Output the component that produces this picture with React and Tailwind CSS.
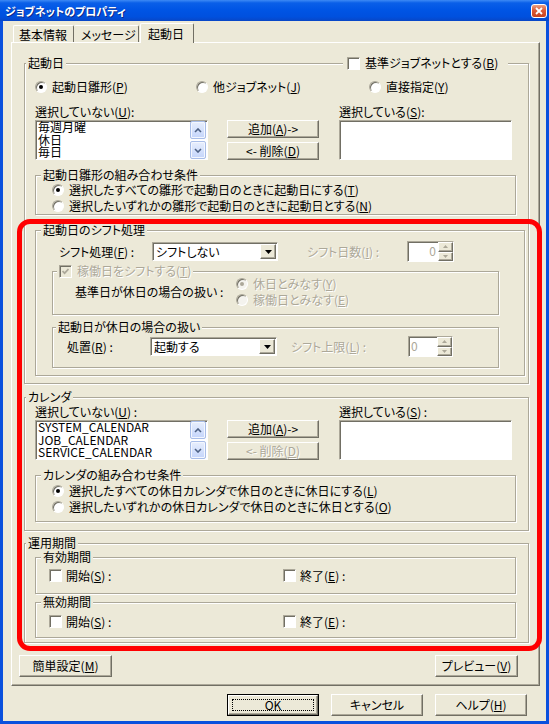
import React from 'react';

const sunken = "border border-t-[#aca899] border-l-[#aca899] border-r-white border-b-white shadow-[inset_1px_1px_0_#716f64]";
const raised = "border border-t-white border-l-white border-r-[#716f64] border-b-[#716f64] shadow-[inset_-1px_-1px_0_#aca899]";
const etched = "border border-[#aca899] shadow-[inset_1px_1px_0_#fff,1px_1px_0_#fff]";
const dim = "text-[#aca899] [text-shadow:1px_1px_0_#fff]";

function K({ children }) {
  return <span className="underline underline-offset-[1px]">{children}</span>;
}

function Radio({ checked, disabled }) {
  return (
    <span className={`${sunken} rounded-full w-[12px] h-[12px] shrink-0 flex items-center justify-center ${disabled ? 'bg-[#f4f3ee]' : 'bg-white'}`}>
      {checked && <span className={`w-[4px] h-[4px] rounded-full ${disabled ? 'bg-[#aca899]' : 'bg-black'}`} />}
    </span>
  );
}

function CheckBox({ checked, disabled }) {
  return (
    <span className={`${sunken} w-[13px] h-[13px] shrink-0 flex items-center justify-center ${disabled ? 'bg-[#ece9d8]' : 'bg-white'}`}>
      {checked && (
        <svg width="7" height="7" viewBox="0 0 7 7">
          <path d="M0.5 3L2.6 5.2L6.5 1" fill="none" stroke={disabled ? '#aca899' : '#000'} strokeWidth="1.7" />
        </svg>
      )}
    </span>
  );
}

function RadioOpt({ checked, disabled, className = '', children }) {
  return (
    <div className={`flex items-center h-[12px] ${className}`}>
      <Radio checked={checked} disabled={disabled} />
      <span className={`ml-[5px] whitespace-nowrap ${disabled ? dim : ''}`}>{children}</span>
    </div>
  );
}

function CheckOpt({ className = '', children }) {
  return (
    <div className={`flex items-center h-[13px] ${className}`}>
      <CheckBox />
      <span className="ml-[4px] whitespace-nowrap">{children}</span>
    </div>
  );
}

function Btn({ className = '', disabled, children }) {
  return (
    <div className={`${raised} bg-[#ece9d8] flex items-center justify-center whitespace-nowrap ${disabled ? dim : ''} ${className}`}>
      {children}
    </div>
  );
}

function ScrollBtn({ down }) {
  return (
    <div className="w-[16px] h-[18px] rounded-[2px] border border-[#a8bde8] bg-[linear-gradient(180deg,#e8effd,#c4d5fb)] shadow-[inset_0_0_0_1px_#f4f7fe] flex items-center justify-center">
      <svg width="8" height="5" viewBox="0 0 8 5">
        <path d={down ? 'M1 1L4 4L7 1' : 'M1 4L4 1L7 4'} fill="none" stroke="#4d6185" strokeWidth="1.6" />
      </svg>
    </div>
  );
}

function ListBox({ items = [] }) {
  return (
    <div className={`${sunken} w-[173px] h-[40px] bg-white flex shrink-0`}>
      <div className="flex-1 pl-[2px] flex flex-col">
        {items.map((t) => (
          <span key={t} className="h-[12.5px] leading-[12.5px] whitespace-nowrap">{t}</span>
        ))}
      </div>
      {items.length > 0 && (
        <div className="w-[16px] mr-[1px] flex flex-col justify-between">
          <ScrollBtn />
          <ScrollBtn down />
        </div>
      )}
    </div>
  );
}

function Combo({ className = '', text }) {
  return (
    <div className={`${sunken} h-[19px] bg-white flex items-center shrink-0 ${className}`}>
      <span className="flex-1 pl-[3px] whitespace-nowrap">{text}</span>
      <div className={`${raised} bg-[#ece9d8] w-[16px] h-[15px] mr-[1px] flex items-center justify-center`}>
        <svg width="7" height="4" viewBox="0 0 7 4">
          <path d="M0 0H7L3.5 4Z" fill="#000" />
        </svg>
      </div>
    </div>
  );
}

function Spin({ className = '', textClass = '' }) {
  return (
    <div className={`${sunken} bg-white flex shrink-0 ${className}`}>
      <span className={`flex-1 px-[2px] pt-[3px] text-[#aca899] ${textClass}`}>0</span>
      <div className="w-[15px] flex flex-col">
        <div className={`${raised} flex-1 bg-[#ece9d8] flex items-center justify-center`}>
          <svg width="5" height="3" viewBox="0 0 5 3"><path d="M2.5 0L5 3H0Z" fill="#aca899" /></svg>
        </div>
        <div className={`${raised} flex-1 bg-[#ece9d8] flex items-center justify-center`}>
          <svg width="5" height="3" viewBox="0 0 5 3"><path d="M0 0H5L2.5 3Z" fill="#aca899" /></svg>
        </div>
      </div>
    </div>
  );
}

function Group({ className = '', label, labelClass = 'ml-[1px]', right, children }) {
  return (
    <div className={`${etched} flex flex-col shrink-0 ${className}`}>
      <div className="-mt-[7px] h-[12px] flex items-center justify-between">
        <span className={`px-[2px] h-[13px] bg-[#ece9d8] flex items-center gap-[5px] whitespace-nowrap ${labelClass}`}>{label}</span>
        {right}
      </div>
      {children}
    </div>
  );
}

function TitleBar() {
  return (
    <div className="h-[21px] shrink-0 flex items-center pl-[5px] bg-[linear-gradient(180deg,#3d8af5_0%,#0a5fe8_14%,#0055e5_45%,#0050de_80%,#0846c6_100%)]">
      <span className="text-white text-[11px] font-bold [text-shadow:1px_1px_0_#0a2a8a]">ジョブネットのプロパティ</span>
      <div className="ml-auto mr-[2px] w-[16px] h-[14px] rounded-[3px] border border-white bg-[linear-gradient(180deg,#eaa083,#dc5a36_45%,#c7421f)] flex items-center justify-center">
        <svg width="8" height="8" viewBox="0 0 8 8">
          <path d="M1 1L7 7M7 1L1 7" stroke="#fff" strokeWidth="1.8" />
        </svg>
      </div>
    </div>
  );
}

function Tabs() {
  return (
    <div className="h-[21px] shrink-0 flex items-end pl-[10px]">
      <div className="w-[61px] h-[17px] border-l border-t border-r border-l-white border-t-white border-r-[#716f64] rounded-t-[2px] flex items-center pl-[5px] pt-[2px]">
        基本情報
      </div>
      <div className="w-[65px] h-[17px] border-t border-r border-t-white border-r-[#716f64] rounded-t-[2px] flex items-center pl-[7px] pt-[2px]">
        メッセージ
      </div>
      <div className="ml-[1px] w-[54px] h-[20px] -mb-[1px] relative z-10 bg-[#ece9d8] border-l border-t border-r border-l-white border-t-white border-r-[#716f64] rounded-t-[2px] flex items-center pl-[7px] pt-[1px]">
        起動日
      </div>
    </div>
  );
}

export default function App() {
  return (
    <div className="relative w-[549px] h-[724px] bg-[#0a50dd] flex flex-col overflow-hidden text-[12px] leading-[12px] text-black [font-family:'Noto_Sans_CJK_JP','Noto_Sans',sans-serif] [font-feature-settings:'palt']">
      <TitleBar />
      <div className="mx-[3px] h-[700px] bg-[#ece9d8] flex flex-col">
        <Tabs />
        <div className="ml-[8px] w-[529px] h-[644px] shrink-0 border border-t-white border-l-white border-r-[#716f64] border-b-[#716f64] shadow-[inset_-1px_-1px_0_#aca899] flex flex-col">
          {/* 起動日 */}
          <Group
            className="ml-[12px] mt-[20px] w-[505px] h-[321px]"
            label="起動日"
            right={
              <div className="mr-[20px] w-[165px] h-[13px] pl-[4px] bg-[#ece9d8] flex items-center gap-[5px]">
                <CheckBox />
                <span className="whitespace-nowrap">基準ジョブネットとする(<K>B</K>)</span>
              </div>
            }
          >
            <div className="mt-[12px] ml-[10px] h-[12px] flex">
              <RadioOpt checked className="w-[161px]">起動日雛形(<K>P</K>)</RadioOpt>
              <RadioOpt className="w-[173px]">他ジョブネット(<K>J</K>)</RadioOpt>
              <RadioOpt>直接指定(<K>Y</K>)</RadioOpt>
            </div>
            <div className="mt-[13px] ml-[10px] h-[12px] flex">
              <span className="w-[304px]">選択していない(<K>U</K>):</span>
              <span>選択している(<K>S</K>):</span>
            </div>
            <div className="mt-[2px] ml-[10px] h-[40px] flex">
              <ListBox items={['毎週月曜', '休日', '毎日']} />
              <div className="ml-[19px] flex flex-col gap-[4px]">
                <Btn className="w-[92px] h-[19px]">追加(<K>A</K>){'->'}</Btn>
                <Btn className="w-[92px] h-[19px]">{'<- '}削除(<K>D</K>)</Btn>
              </div>
              <div className="ml-[20px]">
                <ListBox />
              </div>
            </div>
            <Group className="mt-[15px] ml-[10px] w-[481px] h-[40px]" labelClass="ml-[5px]" label="起動日雛形の組み合わせ条件">
              <RadioOpt checked className="mt-[3px] ml-[16px]">選択したすべての雛形で起動日のときに起動日にする(<K>T</K>)</RadioOpt>
              <RadioOpt className="mt-[4px] ml-[16px]">選択したいずれかの雛形で起動日のときに起動日とする(<K>N</K>)</RadioOpt>
            </Group>

            {/* 起動日のシフト処理 */}
            <Group className="mt-[15px] ml-[10px] w-[490px] h-[146px]" labelClass="ml-[5px]" label="起動日のシフト処理">
              <div className="mt-[5px] ml-[23px] h-[21px] flex items-center">
                <span className="w-[93px] whitespace-nowrap">シフト処理(<K>F</K>) :</span>
                <Combo className="w-[126px]" text="シフトしない" />
                <span className={`ml-[29px] w-[100px] whitespace-nowrap ${dim}`}>シフト日数(<K>I</K>) :</span>
                <Spin className="w-[47px] h-[21px]" textClass="text-right" />
              </div>
              <Group
                className="mt-[9px] ml-[16px] w-[447px] h-[44px]"
                labelClass="ml-[4px]"
                label={
                  <>
                    <CheckBox checked disabled />
                    <span className={dim}>稼働日をシフトする(<K>T</K>)</span>
                  </>
                }
              >
                <div className="mt-[1px] ml-[22px] h-[28px] flex items-center">
                  <span className="w-[161px] whitespace-nowrap">基準日が休日の場合の扱い :</span>
                  <div className="flex flex-col gap-[4px]">
                    <RadioOpt checked disabled>休日とみなす(<K>Y</K>)</RadioOpt>
                    <RadioOpt disabled>稼働日とみなす(<K>E</K>)</RadioOpt>
                  </div>
                </div>
              </Group>
              <Group className="mt-[12px] ml-[16px] w-[447px] h-[41px]" labelClass="ml-[3px]" label="起動日が休日の場合の扱い">
                <div className="mt-[3px] ml-[14px] h-[21px] flex items-center">
                  <span className="w-[83px] whitespace-nowrap">処置(<K>R</K>) :</span>
                  <Combo className="w-[127px]" text="起動する" />
                  <span className={`ml-[14px] w-[117px] whitespace-nowrap ${dim}`}>シフト上限(<K>L</K>) :</span>
                  <Spin className="w-[45px] h-[21px]" textClass="text-left" />
                </div>
              </Group>
            </Group>
          </Group>

          {/* カレンダ */}
          <Group className="ml-[12px] mt-[13px] w-[505px] h-[134px]" label="カレンダ">
            <div className="mt-[3px] ml-[10px] h-[12px] flex">
              <span className="w-[304px]">選択していない(<K>U</K>) :</span>
              <span>選択している(<K>S</K>) :</span>
            </div>
            <div className="mt-[2px] ml-[10px] h-[40px] flex">
              <ListBox items={['SYSTEM_CALENDAR', 'JOB_CALENDAR', 'SERVICE_CALENDAR']} />
              <div className="ml-[19px] flex flex-col gap-[4px]">
                <Btn className="w-[92px] h-[19px]">追加(<K>A</K>){'->'}</Btn>
                <Btn disabled className="w-[92px] h-[19px]">{'<- '}削除(<K>D</K>)</Btn>
              </div>
              <div className="ml-[20px]">
                <ListBox />
              </div>
            </div>
            <Group className="mt-[15px] ml-[10px] w-[481px] h-[47px]" labelClass="ml-[5px]" label="カレンダの組み合わせ条件">
              <RadioOpt checked className="mt-[4px] ml-[16px]">選択したすべての休日カレンダで休日のときに休日にする(<K>L</K>)</RadioOpt>
              <RadioOpt className="mt-[4px] ml-[16px]">選択したいずれかの休日カレンダで休日のときに休日とする(<K>O</K>)</RadioOpt>
            </Group>
          </Group>

          {/* 運用期間 */}
          <Group className="ml-[12px] mt-[12px] w-[505px] h-[100px]" label="運用期間">
            <Group className="mt-[8px] ml-[10px] w-[481px] h-[37px]" labelClass="ml-[5px]" label="有効期間">
              <div className="mt-[6px] ml-[13px] h-[13px] flex">
                <CheckOpt className="w-[234px]">開始(<K>S</K>) :</CheckOpt>
                <CheckOpt>終了(<K>E</K>) :</CheckOpt>
              </div>
            </Group>
            <Group className="mt-[8px] ml-[10px] w-[481px] h-[36px]" labelClass="ml-[5px]" label="無効期間">
              <div className="mt-[7px] ml-[13px] h-[13px] flex">
                <CheckOpt className="w-[234px]">開始(<K>S</K>) :</CheckOpt>
                <CheckOpt>終了(<K>E</K>) :</CheckOpt>
              </div>
            </Group>
          </Group>

          <div className="mt-[12px] ml-[7px] mr-[21px] flex justify-between">
            <Btn className="w-[93px] h-[22px]">簡単設定(<K>M</K>)</Btn>
            <Btn className="w-[83px] h-[22px]">プレビュー(<K>V</K>)</Btn>
          </div>
        </div>

        <div className="mt-[8px] mr-[19px] flex justify-end gap-[12px]">
          <div className="w-[92px] h-[22px] border border-black flex">
            <div className={`${raised} flex-1 bg-[#ece9d8] p-[3px] flex`}>
              <div className="flex-1 border border-dotted border-black flex items-center justify-center">OK</div>
            </div>
          </div>
          <Btn className="w-[92px] h-[22px]">キャンセル</Btn>
          <Btn className="w-[92px] h-[22px]">ヘルプ(<K>H</K>)</Btn>
        </div>
      </div>

      <div className="absolute left-[17px] top-[219px] w-[525px] h-[432px] rounded-[13px] border-[5px] border-[#ff0000] pointer-events-none" />
    </div>
  );
}
